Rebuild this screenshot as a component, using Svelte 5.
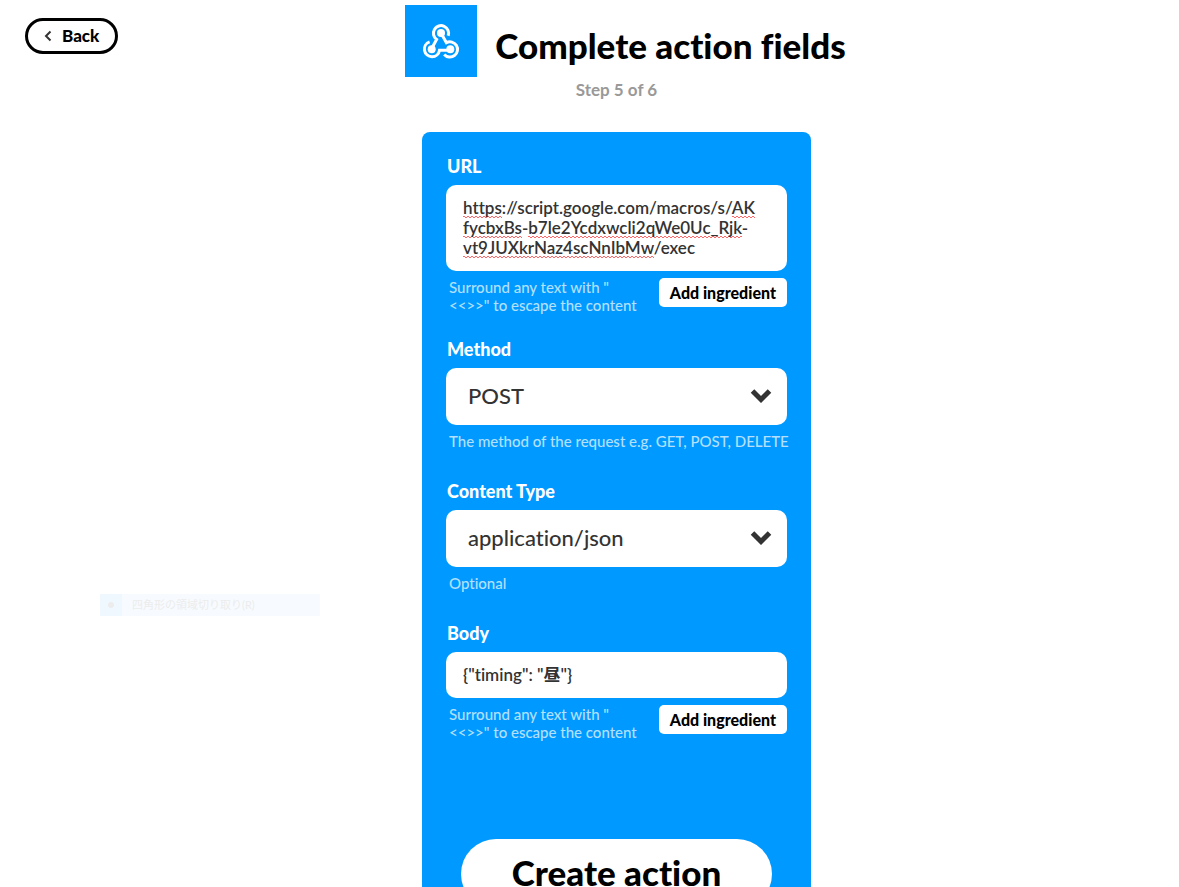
<script>
  let url = $state(
    'https://script.google.com/macros/s/AK\nfycbxBs-b7le2Ycdxwcli2qWe0Uc_Rjk-\nvt9JUXkrNaz4scNnIbMw/exec'
  );
  let method = $state('POST');
  let contentType = $state('application/json');
  let body = $state('{"timing": "昼"}');

  // Splits the address into runs and flags those the spell checker underlines.
  const runs = $derived(
    url
      .split(/(:\/\/script\.google\.com\/macros\/s\/|\n|-|\/exec)/)
      .map((text) => ({ text, misspelt: /^\w+$/.test(text) }))
  );
</script>

{#snippet chevron()}
  <svg class="chevron" viewBox="0 0 22 16" aria-hidden="true">
    <path d="M2.5 3 11 11.5 19.5 3" fill="none" stroke="#333" stroke-width="5" />
  </svg>
{/snippet}

<div class="page">
  <button class="back" type="button">
    <svg viewBox="0 0 8 12" aria-hidden="true">
      <path d="M6.5 1.5 2 6l4.5 4.5" fill="none" stroke="#333" stroke-width="2" />
    </svg>
    Back
  </button>

  <main>
    <header>
      <div class="title">
        <svg class="service" viewBox="0 0 72 72" aria-hidden="true">
          <rect width="72" height="72" fill="#09f" />
          <g fill="none" stroke="#fff" stroke-width="3">
            <path d="M43.2 30.7A7.6 7.6 0 1 0 31.6 34.4L26.7 43.5" />
            <path d="M24.6 36.9A7.6 7.6 0 1 0 34.5 45.2H45.3" />
            <path d="M39.2 49.4A7.6 7.6 0 1 0 41.4 37.7L36 28" />
          </g>
          <g fill="#fff">
            <circle cx="36" cy="28" r="4" />
            <circle cx="26.7" cy="44.2" r="4" />
            <circle cx="45.3" cy="44.2" r="4" />
          </g>
        </svg>
        <h1>Complete action fields</h1>
      </div>
      <p class="step">Step 5 of 6</p>
    </header>

    <form class="panel" onsubmit={(e) => e.preventDefault()}>
      <div class="field">
        <label for="url">URL</label>
        <div class="editor">
          <div class="marks" aria-hidden="true">{#each runs as run}<span class:misspelt={run.misspelt}>{run.text}</span>{/each}</div>
          <textarea id="url" rows="3" spellcheck="false" bind:value={url}></textarea>
        </div>
        <div class="below">
          <p>Surround any text with "<br />&lt;&lt;&gt;&gt;" to escape the content</p>
          <button class="add" type="button">Add ingredient</button>
        </div>
      </div>

      <div class="field">
        <label for="method">Method</label>
        <div class="choice">
          <select id="method" bind:value={method}>
            <option>POST</option>
          </select>
          {@render chevron()}
        </div>
        <div class="below"><p>The method of the request e.g. GET, POST, DELETE</p></div>
      </div>

      <div class="field">
        <label for="content-type">Content Type</label>
        <div class="choice">
          <select id="content-type" bind:value={contentType}>
            <option>application/json</option>
          </select>
          {@render chevron()}
        </div>
        <div class="below"><p>Optional</p></div>
      </div>

      <div class="field">
        <label for="body">Body</label>
        <div class="editor">
          <textarea id="body" rows="1" spellcheck="false" bind:value={body}></textarea>
        </div>
        <div class="below">
          <p>Surround any text with "<br />&lt;&lt;&gt;&gt;" to escape the content</p>
          <button class="add" type="button">Add ingredient</button>
        </div>
      </div>

      <button class="create" type="submit">Create action</button>
    </form>
  </main>

  <div class="ghost"><span class="dot"></span><span class="ghost-text">四角形の領域切り取り(R)</span></div>
</div>

<style>
  :global(body) {
    background: #fff;
  }

  .page,
  .page button,
  .page textarea,
  .page select {
    font-family: Lato, 'Noto Sans CJK JP', sans-serif;
    font-variant-ligatures: none;
  }

  .page {
    position: relative;
    height: 100vh;
    overflow: hidden;
    box-sizing: border-box;
    padding-left: 54px;
    color: #000;
  }

  button {
    margin: 0;
    cursor: pointer;
    color: #000;
    background: #fff;
    font-weight: 900;
  }

  .back {
    position: absolute;
    left: 25px;
    top: 18px;
    display: flex;
    align-items: center;
    gap: 10px;
    height: 36px;
    padding: 0 16px 1px;
    border: 3px solid #000;
    border-radius: 18px;
    font-size: 17px;
  }

  .back svg {
    width: 8px;
    height: 12px;
  }

  header {
    display: flex;
    flex-direction: column;
    align-items: center;
    padding-top: 5px;
  }

  .title {
    display: flex;
    align-items: center;
    gap: 18px;
    padding-left: 18px;
  }

  .service {
    width: 72px;
    height: 72px;
  }

  h1 {
    margin: 8px 0 0;
    font-size: 35px;
    line-height: 40px;
    font-weight: 900;
  }

  .step {
    margin: 3px 0 0;
    font-size: 17px;
    line-height: 20px;
    font-weight: 700;
    color: #999;
  }

  .panel {
    display: flex;
    flex-direction: column;
    gap: 23px;
    box-sizing: border-box;
    width: 389px;
    max-width: 100%;
    margin: 32px auto 0;
    padding: 22px 24px 60px;
    border-radius: 8px;
    background: #09f;
  }

  .field {
    display: flex;
    flex-direction: column;
  }

  label {
    margin-bottom: 7px;
    padding-left: 1px;
    font-size: 18px;
    line-height: 24px;
    font-weight: 900;
    color: #fff;
  }

  .editor,
  .choice {
    display: grid;
    border-radius: 10px;
    background: #fff;
  }

  .editor > *,
  .choice > * {
    grid-area: 1 / 1;
  }

  textarea,
  .marks {
    box-sizing: border-box;
    width: 100%;
    margin: 0;
    padding: 13px 17px;
    border: 0;
    background: none;
    font-size: 17px;
    line-height: 20px;
    font-weight: 600;
    white-space: pre-wrap;
    overflow: hidden;
  }

  textarea {
    display: block;
    resize: none;
    outline: none;
    color: #333;
  }

  .marks {
    color: transparent;
  }

  .misspelt {
    padding-bottom: 1px;
    background:
      linear-gradient(to right, #f66 50%, transparent 50%) 0 calc(100% - 2px) / 4px 1px repeat-x,
      linear-gradient(to right, #f66 50%, transparent 50%) 2px calc(100% - 1px) / 4px 1px repeat-x;
  }

  select {
    appearance: none;
    height: 57px;
    width: 100%;
    padding: 0 60px 2px 22px;
    border: 0;
    border-radius: 10px;
    outline: none;
    background: none;
    font-size: 22px;
    font-weight: 500;
    color: #333;
  }

  .chevron {
    justify-self: end;
    align-self: center;
    width: 22px;
    height: 16px;
    margin: 0 15px 2px 0;
    pointer-events: none;
  }

  .below {
    display: flex;
    justify-content: space-between;
    align-items: flex-start;
    min-height: 24px;
    margin-top: 7px;
    padding-left: 3px;
  }

  .below p {
    margin: 0;
    font-size: 15px;
    line-height: 18px;
    font-weight: 500;
    white-space: nowrap;
    color: #b3e0ff;
  }

  .add {
    height: 29px;
    padding: 0 11px 1px;
    border: 0;
    border-radius: 5px;
    font-size: 16px;
  }

  .create {
    height: 70px;
    margin: 75px 15px 0;
    padding: 0 0 5px;
    border: 0;
    border-radius: 35px;
    font-size: 35px;
  }

  .ghost {
    position: absolute;
    left: 100px;
    top: 594px;
    display: flex;
    align-items: center;
    width: 220px;
    height: 22px;
    background: linear-gradient(to right, #f0f8ff 22px, #f7fbff 22px);
    font-size: 11px;
    line-height: 18px;
    color: #ececec;
  }

  .dot {
    width: 6px;
    height: 6px;
    margin: 0 18px 0 8px;
    border-radius: 50%;
    background: #ececec;
  }
</style>
